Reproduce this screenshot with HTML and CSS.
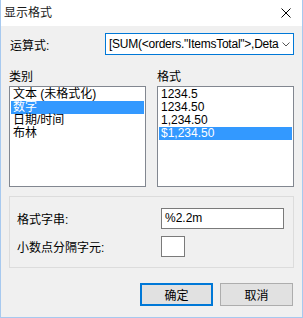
FILE: index.html
```html
<!DOCTYPE html>
<html lang="zh-CN">

<head>
    <meta charset="UTF-8">
    <meta name="viewport" content="width=device-width, initial-scale=1.0">
    <title>显示格式</title>
    <link rel="stylesheet" href="styles.css">
</head>

<body>
    <div class="dialog">
        <div class="titlebar">
            <span class="title">显示格式</span>
            <svg class="close" width="10" height="10" viewBox="0 0 10 10">
                <path d="M0.5 0.5 L9.5 9.5 M9.5 0.5 L0.5 9.5" stroke="#000" stroke-width="1" fill="none" />
            </svg>
        </div>

        <div class="content">
            <div class="expr-row">
                <span class="expr-label">运算式:</span>
                <div class="combo">
                    <span class="combo-text">[SUM(&lt;orders."ItemsTotal"&gt;,Deta</span>
                    <svg class="chevron" width="8" height="5" viewBox="0 0 8 5">
                        <path d="M0.5 0.5 L4 4 L7.5 0.5" stroke="#555" stroke-width="1" fill="none" />
                    </svg>
                </div>
            </div>

            <div class="lists">
                <div class="list-col">
                    <div class="list-label">类别</div>
                    <ul class="listbox">
                        <li>文本 (未格式化)</li>
                        <li class="selected">数字</li>
                        <li>日期/时间</li>
                        <li>布林</li>
                    </ul>
                </div>
                <div class="list-col">
                    <div class="list-label">格式</div>
                    <ul class="listbox">
                        <li>1234.5</li>
                        <li>1234.50</li>
                        <li>1,234.50</li>
                        <li class="selected">$1,234.50</li>
                    </ul>
                </div>
            </div>

            <div class="group">
                <span class="field-label">格式字串:</span>
                <div class="textbox">%2.2m</div>
                <span class="field-label">小数点分隔字元:</span>
                <div class="textbox small"></div>
            </div>

            <div class="buttons">
                <button class="btn default">确定</button>
                <button class="btn">取消</button>
            </div>
        </div>
    </div>
</body>

</html>
```

FILE: styles.css
```css
body {
    margin: 0;
    padding: 0;
    font-family: "Liberation Sans", "Noto Sans CJK SC", sans-serif;
    font-size: 12px;
    color: #000;
}

.dialog {
    width: 303px;
    height: 318px;
    box-sizing: border-box;
    background: #f0f0f0;
    border: 1px solid #a7c9ef;
    border-top: none;
    overflow: hidden;
}

.titlebar {
    height: 26px;
    background: #fff;
    display: flex;
    align-items: center;
    justify-content: space-between;
    padding: 0 11px 0 3px;
}

.title {
    line-height: 14px;
    color: #1a1a1a;
}

.content {
    padding: 7px 8px 0;
}

.expr-row {
    display: flex;
    align-items: center;
    justify-content: space-between;
    height: 22px;
}

.expr-label {
    padding-left: 1px;
}

.combo {
    width: 189px;
    height: 22px;
    box-sizing: border-box;
    border: 1px solid #0078d7;
    background: #fff;
    display: flex;
    align-items: center;
    padding: 0 4px 0 3px;
    gap: 3px;
}

.combo-text {
    flex: 1;
    white-space: nowrap;
    letter-spacing: -0.25px;
}

.chevron {
    flex-shrink: 0;
}

.lists {
    display: flex;
    gap: 11px;
    margin-top: 15px;
}

.list-col {
    width: 137px;
}

.list-label {
    line-height: 14px;
    margin-bottom: 2px;
}

.listbox {
    list-style: none;
    margin: 0;
    height: 101px;
    box-sizing: border-box;
    border: 1px solid #828790;
    background: #fff;
    padding: 1px;
}

.listbox li {
    height: 13px;
    line-height: 13px;
    padding-left: 2px;
    white-space: nowrap;
}

.listbox li.selected {
    background: #3399ff;
    color: #fff;
}

.group {
    margin-top: 9px;
    height: 72px;
    box-sizing: border-box;
    border: 1px solid #dcdcdc;
    padding: 11px 7px 10px;
    display: grid;
    grid-template-columns: 144px auto;
    grid-template-rows: 21px 21px;
    row-gap: 7px;
    align-items: center;
}

.textbox {
    width: 123px;
    height: 21px;
    box-sizing: border-box;
    border: 1px solid #7a7a7a;
    background: #fff;
    padding: 0 3px;
    line-height: 19px;
}

.textbox.small {
    width: 24px;
}

.buttons {
    display: flex;
    justify-content: flex-end;
    gap: 7px;
    margin-top: 15px;
    padding-right: 1px;
}

.btn {
    width: 73px;
    height: 23px;
    box-sizing: border-box;
    background: #e1e1e1;
    border: 1px solid #adadad;
    font-family: inherit;
    font-size: 12px;
    color: #000;
    padding: 0;
}

.btn.default {
    border: 2px solid #0078d7;
}
```
